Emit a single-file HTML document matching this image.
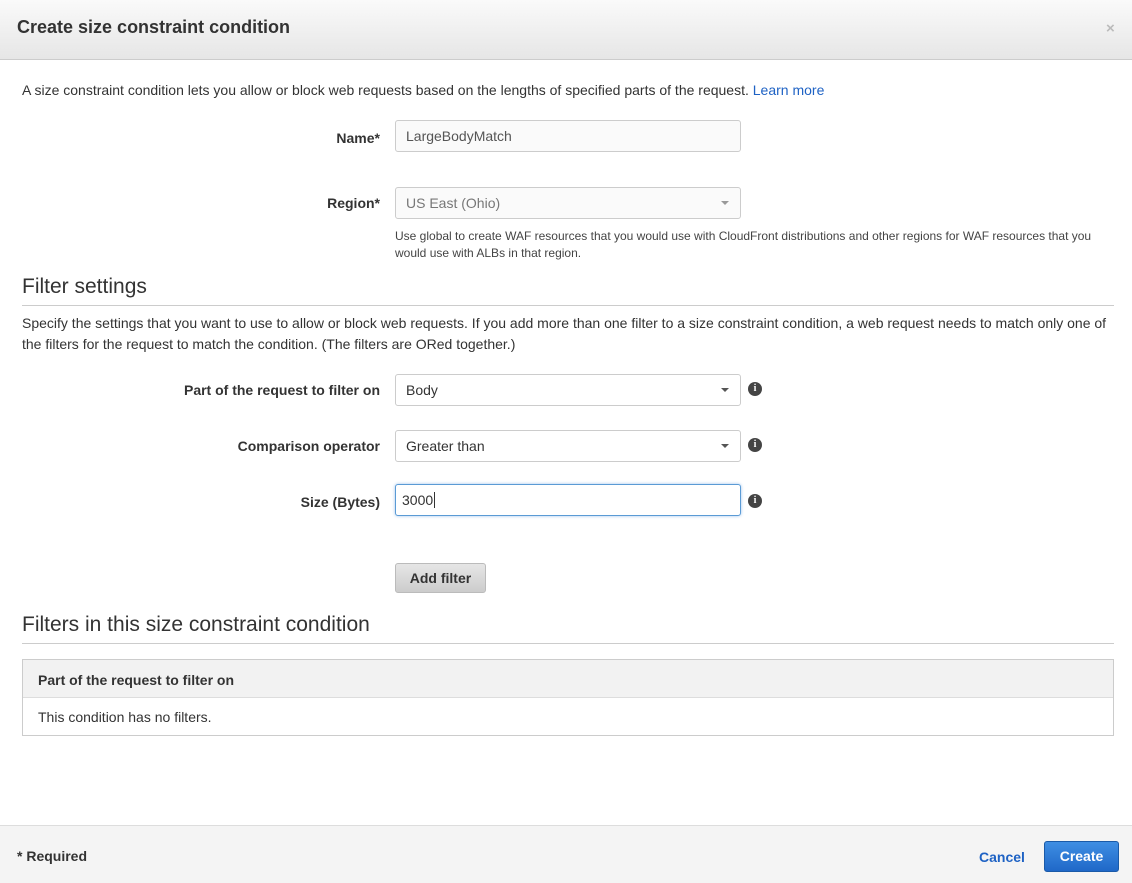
<!DOCTYPE html>
<html><head><style>
*{box-sizing:border-box;margin:0;padding:0}
body{width:1132px;height:883px;font-family:"Liberation Sans",Arial,sans-serif;color:#333;font-size:14px;background:#fff;position:relative;overflow:hidden}
.a{position:absolute}
.hdr{left:0;top:0;width:1132px;height:60px;background:linear-gradient(#fafafa,#e6e6e6);border-bottom:1px solid #ccc}
.lbl{font-weight:bold;font-size:14px;text-align:right;width:380px;left:0}
.inp{left:395px;width:346px;height:32px;border:1px solid #ccc;border-radius:3px;padding:0 10px;line-height:30px;font-size:14px;background:#fff}
.car{position:absolute;right:11px;top:13px;border-left:4px solid transparent;border-right:4px solid transparent;border-top:4px solid #555}
.info{left:748px;width:14px;height:14px;border-radius:50%;background:#444;color:#fff;font-size:10px;font-weight:bold;text-align:center;line-height:14px;font-family:"Liberation Serif",serif}
h2{font-weight:normal;font-size:21px;color:#333}
.rule{left:22px;width:1092px;height:1px;background:#ccc}
</style></head><body>
<div class="a hdr"></div>
<div class="a" style="left:17px;top:17px;font-size:18px;font-weight:bold;color:#333">Create size constraint condition</div>
<div class="a" style="left:1106px;top:20px;font-size:15px;color:#bbb;font-weight:bold">×</div>
<div class="a" style="left:22px;top:82px">A size constraint condition lets you allow or block web requests based on the lengths of specified parts of the request. <span style="color:#1e62c4">Learn more</span></div>
<div class="a lbl" style="top:130px">Name*</div>
<div class="a inp" style="top:120px;background:#fafafa;color:#555">LargeBodyMatch</div>
<div class="a lbl" style="top:195px">Region*</div>
<div class="a inp" style="top:187px;background:#fafafa;color:#777">US East (Ohio)<span class="car" style="border-top-color:#999"></span></div>
<div class="a" style="left:395px;top:228px;font-size:12px;line-height:17px;color:#444;width:700px">Use global to create WAF resources that you would use with CloudFront distributions and other regions for WAF resources that you would use with ALBs in that region.</div>
<h2 class="a" style="left:22px;top:275px">Filter settings</h2>
<div class="a rule" style="top:305px"></div>
<div class="a" style="left:22px;top:313px;line-height:21px;width:1100px">Specify the settings that you want to use to allow or block web requests. If you add more than one filter to a size constraint condition, a web request needs to match only one of the filters for the request to match the condition. (The filters are ORed together.)</div>
<div class="a lbl" style="top:382px">Part of the request to filter on</div>
<div class="a inp" style="top:374px">Body<span class="car"></span></div>
<div class="a info" style="top:382px">i</div>
<div class="a lbl" style="top:438px">Comparison operator</div>
<div class="a inp" style="top:430px">Greater than<span class="car"></span></div>
<div class="a info" style="top:438px">i</div>
<div class="a lbl" style="top:494px">Size (Bytes)</div>
<div class="a inp" style="top:484px;border-color:#5b9bd5;box-shadow:0 0 3px #9ec3ec;padding-left:6px">3000<span style="border-left:1px solid #333;margin-left:1px"></span></div>
<div class="a info" style="top:494px">i</div>
<div class="a" style="left:395px;top:563px;width:91px;height:30px;border:1px solid #bbb;border-radius:3px;background:linear-gradient(#e6e6e6,#ccc);font-weight:bold;text-align:center;line-height:28px">Add filter</div>
<h2 class="a" style="left:22px;top:613px">Filters in this size constraint condition</h2>
<div class="a rule" style="top:643px"></div>
<div class="a" style="left:22px;top:659px;width:1092px;height:77px;border:1px solid #ccc">
<div style="height:38px;background:#f2f2f2;border-bottom:1px solid #ddd;font-weight:bold;padding:12px 15px">Part of the request to filter on</div>
<div style="padding:11px 15px">This condition has no filters.</div></div>
<div class="a" style="left:0;top:825px;width:1132px;height:58px;background:#f4f4f4;border-top:1px solid #ddd"></div>
<div class="a" style="left:17px;top:848px;font-weight:bold">* Required</div>
<div class="a" style="left:979px;top:849px;font-weight:bold;color:#1e62c4">Cancel</div>
<div class="a" style="left:1044px;top:841px;width:75px;height:31px;border:1px solid #1a5aa8;border-radius:3px;background:linear-gradient(#3f8ee3,#1f68c8);color:#fff;font-weight:bold;text-align:center;line-height:29px">Create</div>
</body></html>
